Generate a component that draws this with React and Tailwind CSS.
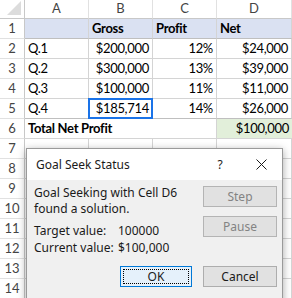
import React from "react";

const rows = [
  { n: 1, fill: true, cells: ["", "Gross", "Profit", "Net"], bold: true },
  { n: 2, cells: ["Q.1", "$200,000", "12%", "$24,000"] },
  { n: 3, cells: ["Q.2", "$300,000", "13%", "$39,000"] },
  { n: 4, cells: ["Q.3", "$100,000", "11%", "$11,000"] },
  { n: 5, cells: ["Q.4", "$185,714", "14%", "$26,000"] },
];

const cols = ["A", "B", "C", "D"];

const App = () => {
  return (
    <div className="relative w-[292px] h-[298px] overflow-hidden bg-white font-['Lato',sans-serif] text-[13px] tracking-[-0.3px] text-black">
      {/* Sheet */}
      <div className="grid grid-cols-[25px_64px_64px_64px_75px]">
        {/* header row */}
        <div className="h-[19px] border-r border-b border-[#c8c8c8] relative">
          <div className="absolute right-[3px] bottom-[3px] w-0 h-0 border-l-[14px] border-l-transparent border-b-[14px] border-b-[#dcdcdc]" />
        </div>
        {cols.map((c) => (
          <div key={c} className="h-[19px] border-r border-b border-[#c8c8c8] border-r-[#e1e1e1] flex items-center justify-center text-[#444] tracking-normal">
            {c}
          </div>
        ))}

        {rows.map((r) => (
          <React.Fragment key={r.n}>
            <div className="h-[20px] border-r border-b border-[#c8c8c8] border-b-[#e1e1e1] flex items-center justify-center text-[#444] tracking-normal">
              {r.n}
            </div>
            {r.cells.map((v, i) => (
              <div
                key={i}
                className={`relative h-[20px] border-r border-b border-[#d4d4d4] flex items-center px-[3px] ${r.fill ? "bg-[#dae1f2]" : ""} ${r.bold ? "font-bold justify-start" : i === 0 ? "justify-start" : "justify-end"} ${r.n === 1 || r.n === 5 ? "border-b-[#bfbfbf]" : ""}`}
              >
                {v}
                {r.n === 5 && i === 1 && (
                  <div className="absolute -left-px -top-px w-[65px] h-[21px] border-2 border-[#1a73e8]" />
                )}
              </div>
            ))}
          </React.Fragment>
        ))}

        {/* row 6 */}
        <div className="h-[20px] border-r border-b border-[#c8c8c8] border-b-[#e1e1e1] flex items-center justify-center text-[#444] tracking-normal">
          6
        </div>
        <div className="col-span-3 h-[20px] border-r border-b border-[#d4d4d4] flex items-center px-[3px] font-bold">
          Total Net Profit
        </div>
        <div className="h-[20px] border-b border-[#d4d4d4] bg-[#e2efda] flex items-center justify-end px-[3px]">
          $100,000
        </div>

        {[7, 8, 9, 10, 11, 12, 13, 14].map((n) => (
          <React.Fragment key={n}>
            <div className="h-[20px] border-r border-b border-[#c8c8c8] border-b-[#e1e1e1] flex items-center justify-center text-[#444] tracking-normal">
              {n}
            </div>
            {cols.map((c) => (
              <div key={c} className="h-[20px] border-r border-b border-[#d4d4d4]" />
            ))}
          </React.Fragment>
        ))}
      </div>

      {/* Goal Seek dialog */}
      <div className="absolute left-[26px] top-[148px] w-[257px] h-[160px] bg-[#f0f0f0] border border-[#9a9a9a] shadow-[0_2px_8px_rgba(0,0,0,0.35)] font-['Noto_Sans',sans-serif] text-[12px] tracking-normal text-[#1a1a1a]">
        <div className="h-[31px] bg-white flex items-center pl-[9px]">
          <span className="flex-1">Goal Seek Status</span>
          <span className="w-[20px] text-center mr-[26px]">?</span>
          <svg width="11" height="11" viewBox="0 0 11 11" className="mr-[15px]">
            <path d="M0.5 0.5 L10.5 10.5 M10.5 0.5 L0.5 10.5" stroke="#1a1a1a" strokeWidth="1" />
          </svg>
        </div>
        <div className="flex pl-[7px] pr-[5px] pt-[5px]">
          <div className="flex-1 leading-[16px]">
            <div>Goal Seeking with Cell D6</div>
            <div>found a solution.</div>
            <div className="grid grid-cols-[84px_auto] mt-[5px] leading-[17px]">
              <span>Target value:</span>
              <span>100000</span>
              <span>Current value:</span>
              <span>$100,000</span>
            </div>
          </div>
          <div className="w-[74px] flex flex-col gap-[9px] pt-[1px]">
            <button className="h-[21px] bg-[#e1e1e1] border border-[#b4b4b4] text-[#838383]">Step</button>
            <button className="h-[21px] bg-[#e1e1e1] border border-[#b4b4b4] text-[#838383]">Pause</button>
          </div>
        </div>
        <div className="flex justify-end gap-[11px] pr-[5px] mt-[10px]">
          <button className="w-[72px] h-[21px] bg-[#e5f1fb] border border-[#0078d7] p-[2px]">
            <span className="flex items-center justify-center w-full h-full border border-dotted border-black">OK</span>
          </button>
          <button className="w-[74px] h-[21px] bg-[#e1e1e1] border border-[#adadad]">Cancel</button>
        </div>
      </div>
    </div>
  );
};

export default App;
